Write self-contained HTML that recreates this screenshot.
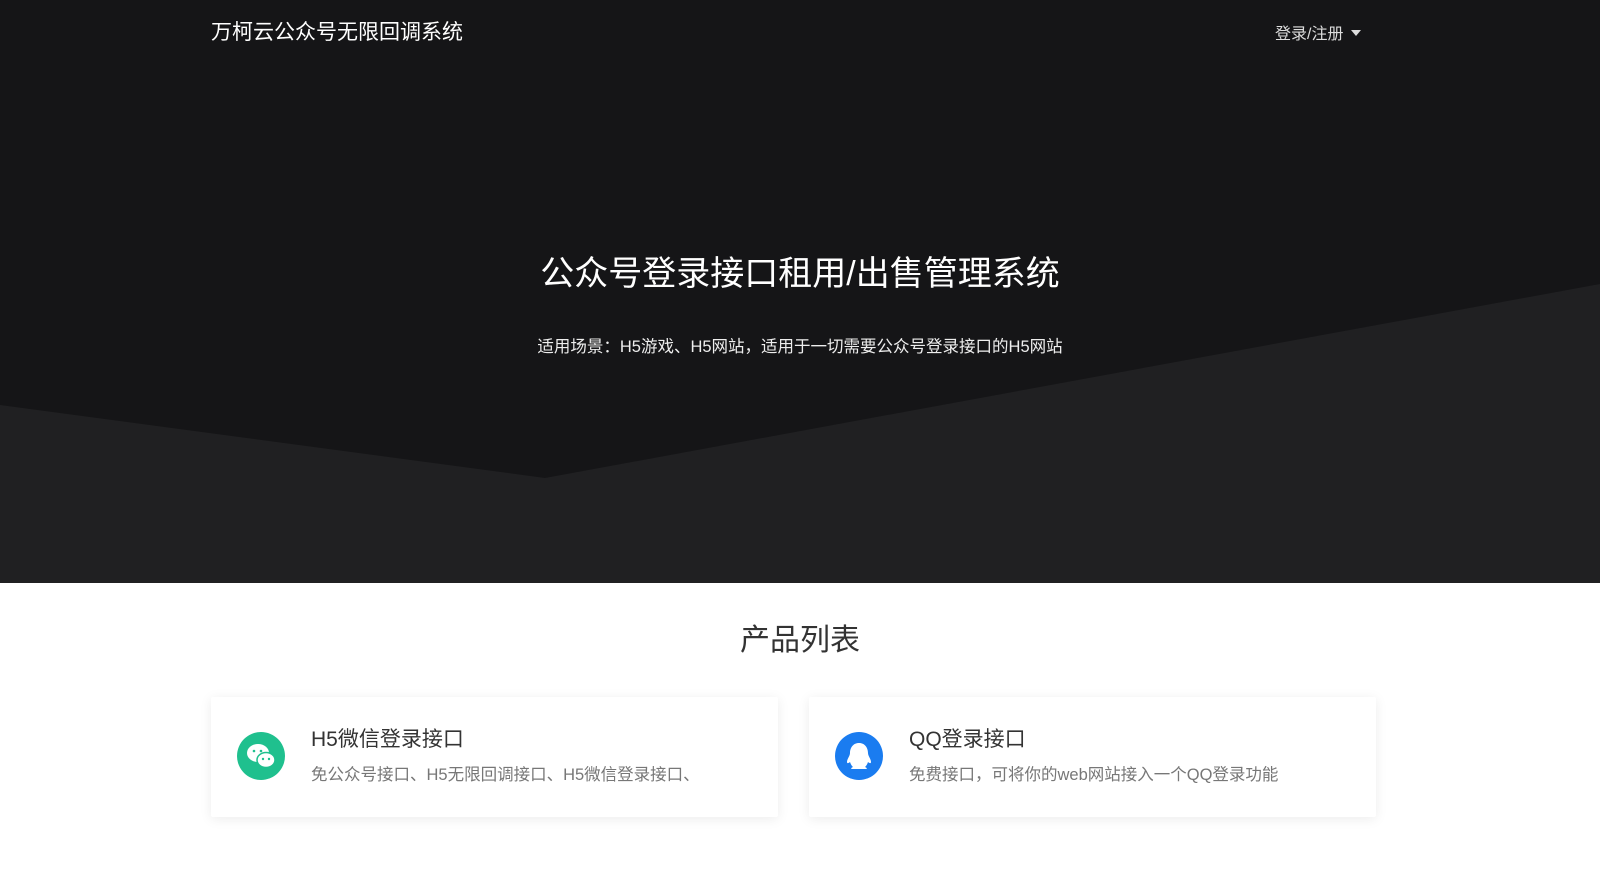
<!DOCTYPE html>
<html><head><meta charset="utf-8"><style>
*{margin:0;padding:0;box-sizing:border-box}
body{width:1600px;height:885px;overflow:hidden;background:#fff;font-family:"Liberation Sans","Noto Sans CJK SC",sans-serif}
.hero{position:absolute;left:0;top:0;width:1600px;height:583px;background:#151517}
.hero svg{position:absolute;left:0;top:0}
.brand{position:absolute;left:211px;top:16px;color:#fff;font-size:21px}
.login{position:absolute;left:1275px;top:20px;color:#ddd;font-size:16px}
.login:after{content:"";display:inline-block;margin-left:8px;border-left:5px solid transparent;border-right:5px solid transparent;border-top:6px solid #ddd;vertical-align:3px}
.h1{position:absolute;left:0;width:1600px;top:246px;text-align:center;color:#fff;font-size:34px}
.sub{position:absolute;left:0;width:1600px;top:333px;text-align:center;color:#eee;font-size:16.5px}
.sec{position:absolute;left:0;width:1600px;top:615px;text-align:center;color:#333;font-size:30px}
.card{position:absolute;top:697px;width:567px;height:120px;background:#fff;box-shadow:0 2px 12px rgba(0,0,0,.08);border-radius:2px}
.ic{position:absolute;left:26px;top:35px;width:48px;height:48px;border-radius:50%}
.t{position:absolute;left:100px;top:26px;font-size:21px;color:#333}
.d{position:absolute;left:100px;top:64px;font-size:16.5px;color:#777}
</style></head><body>
<div class="hero">
<svg width="1600" height="583"><polygon points="0,405 545,478 1600,284 1600,583 0,583" fill="#202022"/></svg>
<div class="brand">万柯云公众号无限回调系统</div>
<div class="login">登录/注册</div>
<div class="h1">公众号登录接口租用/出售管理系统</div>
<div class="sub">适用场景：H5游戏、H5网站，适用于一切需要公众号登录接口的H5网站</div>
</div>
<div class="sec">产品列表</div>
<div class="card" style="left:211px">
<div class="ic" style="background:#1fc08e"><svg width="48" height="48"><ellipse cx="21" cy="21" rx="11" ry="9" fill="#fff"/><ellipse cx="29" cy="28" rx="9" ry="7.5" fill="#fff" stroke="#1fc08e" stroke-width="1.5"/><circle cx="17" cy="19" r="1.3" fill="#1fc08e"/><circle cx="24" cy="19" r="1.3" fill="#1fc08e"/><circle cx="26" cy="27" r="1.2" fill="#1fc08e"/><circle cx="32" cy="27" r="1.2" fill="#1fc08e"/></svg></div>
<div class="t">H5微信登录接口</div>
<div class="d">免公众号接口、H5无限回调接口、H5微信登录接口、</div>
</div>
<div class="card" style="left:809px">
<div class="ic" style="background:#1a7cf0"><svg width="48" height="48"><path d="M24 11c-6 0-9 5-9 10 0 3-3 6-3 9 0 2 2 1 3 0 1 3 2 4 3 5-2 1-3 2 0 2h12c3 0 2-1 0-2 1-1 2-2 3-5 1 1 3 2 3 0 0-3-3-6-3-9 0-5-3-10-9-10z" fill="#fff"/></svg></div>
<div class="t">QQ登录接口</div>
<div class="d">免费接口，可将你的web网站接入一个QQ登录功能</div>
</div>
</body></html>
